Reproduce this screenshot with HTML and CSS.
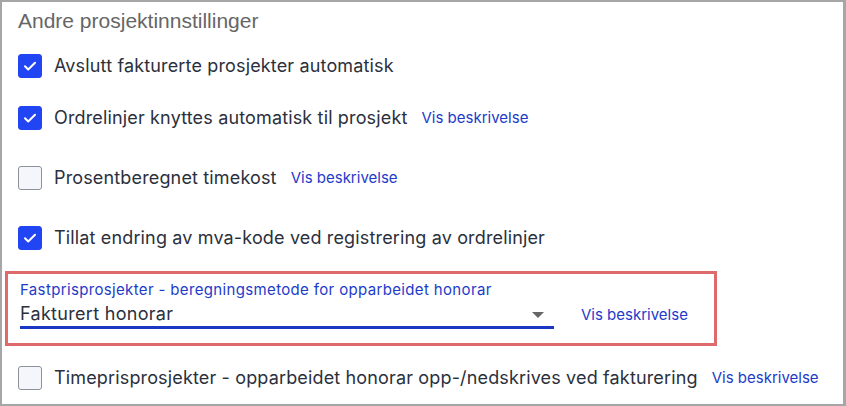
FILE: index.html
```html
<!DOCTYPE html>
<html lang="no">
<head>
<meta charset="utf-8">
<title>Andre prosjektinnstillinger</title>
<link rel="stylesheet" href="styles.css">
</head>
<body>
<div class="frame">
  <h2 class="heading">Andre prosjektinnstillinger</h2>
  <div class="row row-1">
    <span class="box checked"><svg viewBox="0 0 24 24" width="24" height="24"><path d="M7 12.3l3.2 3.2L17 8.7" fill="none" stroke="#fff" stroke-width="2" stroke-linecap="round" stroke-linejoin="round"/></svg></span>
    <span class="label">Avslutt fakturerte prosjekter automatisk</span>
  </div>
  <div class="row row-2">
    <span class="box checked"><svg viewBox="0 0 24 24" width="24" height="24"><path d="M7 12.3l3.2 3.2L17 8.7" fill="none" stroke="#fff" stroke-width="2" stroke-linecap="round" stroke-linejoin="round"/></svg></span>
    <span class="label">Ordrelinjer knyttes automatisk til prosjekt</span>
    <a class="link" href="#">Vis beskrivelse</a>
  </div>
  <div class="row row-3">
    <span class="box"></span>
    <span class="label">Prosentberegnet timekost</span>
    <a class="link" href="#">Vis beskrivelse</a>
  </div>
  <div class="row row-4">
    <span class="box checked"><svg viewBox="0 0 24 24" width="24" height="24"><path d="M7 12.3l3.2 3.2L17 8.7" fill="none" stroke="#fff" stroke-width="2" stroke-linecap="round" stroke-linejoin="round"/></svg></span>
    <span class="label">Tillat endring av mva-kode ved registrering av ordrelinjer</span>
  </div>
  <div class="highlight">
    <div class="field-label">Fastprisprosjekter - beregningsmetode for opparbeidet honorar</div>
    <div class="field-row">
      <div class="select">
        <span class="select-value">Fakturert honorar</span>
        <span class="arrow"></span>
      </div>
      <a class="link link-select" href="#">Vis beskrivelse</a>
    </div>
  </div>
  <div class="row row-last">
    <span class="box"></span>
    <span class="label">Timeprisprosjekter - opparbeidet honorar opp-/nedskrives ved fakturering</span>
    <a class="link" href="#">Vis beskrivelse</a>
  </div>
</div>
</body>
</html>
```

FILE: styles.css
```css
html, body {
  margin: 0;
  padding: 0;
  background: #ffffff;
}

.frame {
  box-sizing: border-box;
  width: 846px;
  height: 406px;
  border: 2px solid #a6a6a6;
  border-right-width: 3px;
  display: flex;
  flex-direction: column;
  overflow: hidden;
  font-family: Inter, "Noto Sans", sans-serif;
  color: #2b303d;
}

.heading {
  margin: 7px 0 0 16px;
  font-family: "Liberation Sans", Arial, sans-serif;
  font-weight: normal;
  font-size: 21px;
  line-height: 24px;
  color: #666666;
}

.row {
  display: flex;
  align-items: center;
  height: 24px;
  padding-left: 16px;
}

.row-1 { margin-top: 21px; }
.row-2 { margin-top: 28px; }
.row-3 { margin-top: 36px; }
.row-4 { margin-top: 36px; }
.row-last { margin-top: 20px; }

.box {
  box-sizing: border-box;
  width: 24px;
  height: 24px;
  flex: none;
  border-radius: 3px;
  border: 1px solid #8c919b;
  background: #f4f6fb;
  margin-right: 12px;
  display: flex;
}

.box.checked {
  background: #2145f2;
  border-color: #2145f2;
}

.box svg {
  margin: -1px;
}

.label {
  font-size: 18px;
  letter-spacing: 0.15px;
  line-height: 24px;
  white-space: nowrap;
}

.link {
  margin-left: 14px;
  font-size: 15px;
  line-height: 24px;
  color: #1d3bc9;
  text-decoration: none;
  white-space: nowrap;
}

.highlight {
  box-sizing: border-box;
  margin: 21px 0 0 3px;
  width: 712px;
  height: 75px;
  border: 3px solid #df6a6e;
  padding: 6px 0 0 12px;
}

.field-label {
  font-size: 15px;
  letter-spacing: 0.35px;
  line-height: 19px;
  color: #1d3bc9;
  white-space: nowrap;
}

.field-row {
  display: flex;
  align-items: center;
  margin-top: 3px;
}

.select {
  box-sizing: border-box;
  width: 534px;
  height: 27px;
  display: flex;
  align-items: center;
  justify-content: space-between;
  border-bottom: 3px solid #1a38c4;
  padding-right: 10px;
}

.select-value {
  font-size: 18px;
  letter-spacing: 0.3px;
  line-height: 24px;
  color: #2b303d;
}

.arrow {
  width: 0;
  height: 0;
  border-left: 6px solid transparent;
  border-right: 6px solid transparent;
  border-top: 6px solid #666666;
  margin-top: 2px;
}

.link-select {
  margin-left: 27px;
  margin-top: -2px;
}
```
